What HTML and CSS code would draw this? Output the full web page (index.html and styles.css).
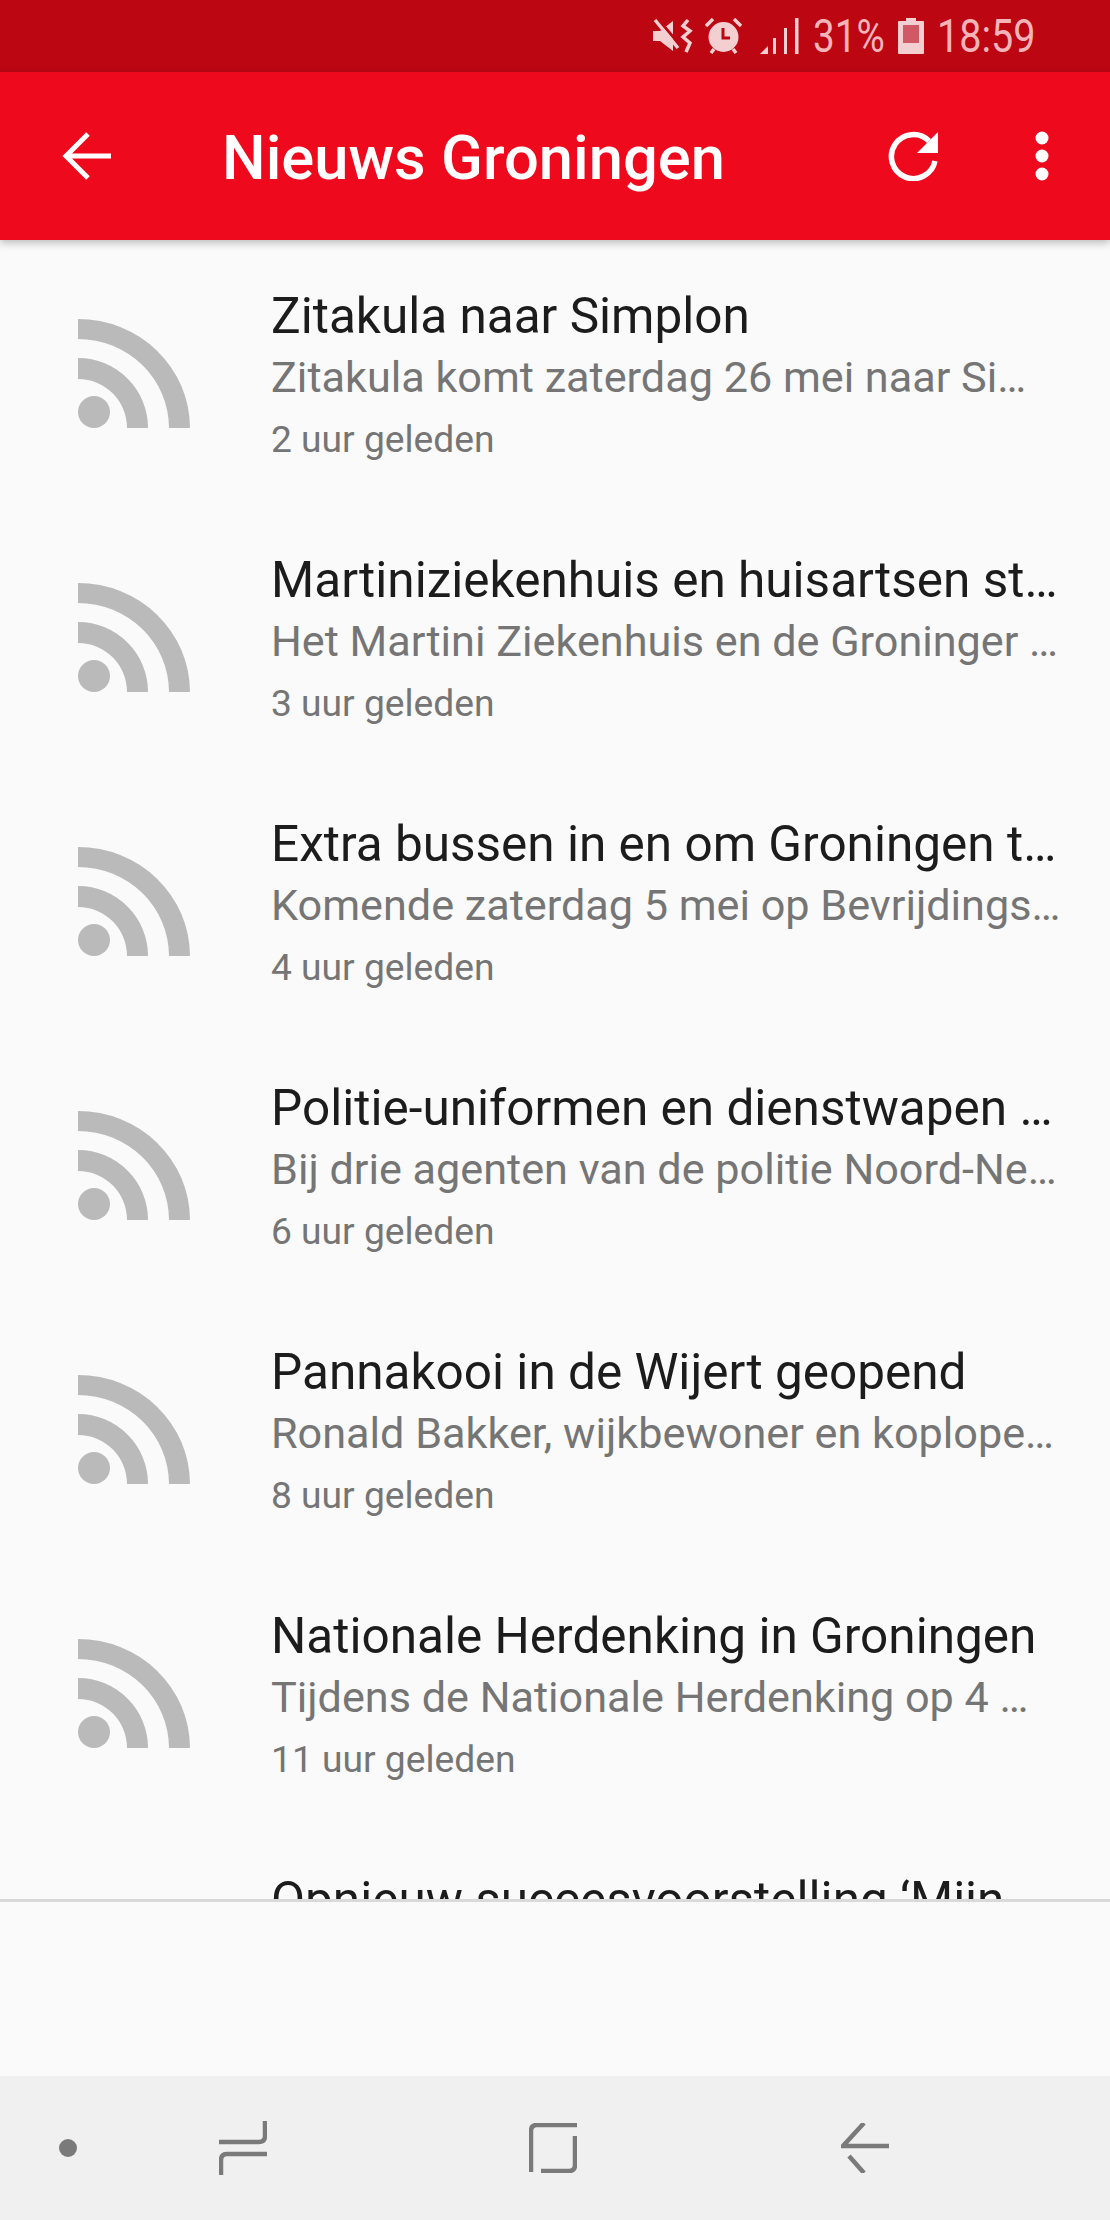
FILE: index.html
```html
<!DOCTYPE html>
<html lang="nl">
<head>
    <meta charset="UTF-8">
    <meta name="viewport" content="width=device-width, initial-scale=1.0">
    <title>Nieuws Groningen</title>
    <link rel="stylesheet" href="styles.css">
</head>
<body>
    <svg class="icon-defs" width="0" height="0">
        <symbol id="rss" viewBox="0 0 112 109">
            <circle cx="16" cy="93" r="16"/>
            <path d="M0 39 A70 70 0 0 1 70 109 H49 A49 49 0 0 0 0 60 Z"/>
            <path d="M0 0 A112 109 0 0 1 112 109 H91 A91 89 0 0 0 0 20 Z"/>
        </symbol>
    </svg>

    <div class="status-bar">
        <svg class="st-mute" width="40" height="36" viewBox="0 0 40 36">
            <path d="M0 13 H7 L20 3 V33 L7 23 H0 Z"/>
            <path d="M4 0 L27 27" stroke="#bc0612" stroke-width="3" fill="none"/>
            <path d="M2 2 L25 30" stroke="#f3cfd2" stroke-width="3.500" fill="none"/>
            <path d="M35 2 L30 8 L37 13 L30 19 L37 25 L33 34" stroke="#f3cfd2" stroke-width="3.500" fill="none"/>
        </svg>
        <svg class="st-alarm" width="37" height="36" viewBox="0 0 37 36">
            <circle cx="18.500" cy="19" r="15" fill="#f3cfd2"/>
            <path d="M1 8 L8 1 M36 8 L29 1 M6 35 L9 31 M31 35 L28 31" stroke="#f3cfd2" stroke-width="3.500" fill="none"/>
            <path d="M18 10 V20 H25" stroke="#bc0612" stroke-width="3" fill="none"/>
        </svg>
        <svg class="st-signal" width="39" height="36" viewBox="0 0 39 36">
            <path d="M0 36 L8 28 V36 Z"/>
            <rect x="13" y="20" width="3" height="16"/>
            <rect x="24" y="10" width="3" height="26"/>
            <rect x="35" y="0" width="3.500" height="36"/>
        </svg>
        <span class="st-text st-battery-text">31%</span>
        <svg class="st-battery" width="26" height="36" viewBox="0 0 26 36">
            <path d="M8 0 H18 V3 H25 Q26 3 26 4 V35 Q26 36 25 36 H1 Q0 36 0 35 V4 Q0 3 1 3 H8 Z" fill="#f3cfd2"/>
            <rect x="5" y="7" width="16" height="18" fill="#cf5a66"/>
        </svg>
        <span class="st-text st-time">18:59</span>
    </div>

    <header class="toolbar">
        <svg class="tb-back" width="50" height="50" viewBox="0 0 50 50">
            <path d="M49 25 H4 M26 3 L4 25 L26 47" stroke="#fff" stroke-width="5" fill="none"/>
        </svg>
        <h1 class="tb-title">Nieuws Groningen</h1>
        <svg class="tb-refresh" width="50" height="50" viewBox="0 0 50 50">
            <path d="M41 10 A22 22 0 1 0 47 30" stroke="#fff" stroke-width="5.500" fill="none"/>
            <path d="M50 1 V22 H29 Z" fill="#fff"/>
        </svg>
        <svg class="tb-more" width="14" height="50" viewBox="0 0 14 50">
            <circle cx="7" cy="7" r="6.500" fill="#fff"/>
            <circle cx="7" cy="25" r="6.500" fill="#fff"/>
            <circle cx="7" cy="43" r="6.500" fill="#fff"/>
        </svg>
    </header>

    <main class="feed">
        <div class="feed-row">
            <svg class="feed-icon"><use href="#rss"/></svg>
            <div class="feed-text">
                <div class="feed-title">Zitakula naar Simplon</div>
                <div class="feed-sub">Zitakula komt zaterdag 26 mei naar Si…</div>
                <div class="feed-time">2 uur geleden</div>
            </div>
        </div>
        <div class="feed-row">
            <svg class="feed-icon"><use href="#rss"/></svg>
            <div class="feed-text">
                <div class="feed-title">Martiniziekenhuis en huisartsen st…</div>
                <div class="feed-sub">Het Martini Ziekenhuis en de Groninger …</div>
                <div class="feed-time">3 uur geleden</div>
            </div>
        </div>
        <div class="feed-row">
            <svg class="feed-icon"><use href="#rss"/></svg>
            <div class="feed-text">
                <div class="feed-title">Extra bussen in en om Groningen t…</div>
                <div class="feed-sub">Komende zaterdag 5 mei op Bevrijdings…</div>
                <div class="feed-time">4 uur geleden</div>
            </div>
        </div>
        <div class="feed-row">
            <svg class="feed-icon"><use href="#rss"/></svg>
            <div class="feed-text">
                <div class="feed-title">Politie-uniformen en dienstwapen …</div>
                <div class="feed-sub">Bij drie agenten van de politie Noord-Ne…</div>
                <div class="feed-time">6 uur geleden</div>
            </div>
        </div>
        <div class="feed-row">
            <svg class="feed-icon"><use href="#rss"/></svg>
            <div class="feed-text">
                <div class="feed-title">Pannakooi in de Wijert geopend</div>
                <div class="feed-sub">Ronald Bakker, wijkbewoner en koplope…</div>
                <div class="feed-time">8 uur geleden</div>
            </div>
        </div>
        <div class="feed-row">
            <svg class="feed-icon"><use href="#rss"/></svg>
            <div class="feed-text">
                <div class="feed-title">Nationale Herdenking in Groningen</div>
                <div class="feed-sub">Tijdens de Nationale Herdenking op 4 …</div>
                <div class="feed-time">11 uur geleden</div>
            </div>
        </div>
        <div class="feed-row">
            <svg class="feed-icon"><use href="#rss"/></svg>
            <div class="feed-text">
                <div class="feed-title">Opnieuw succesvoorstelling ‘Mijn</div>
            </div>
        </div>
    </main>

    <div class="footer-space"></div>

    <nav class="nav-bar">
        <svg class="nav-dot" width="18" height="18" viewBox="0 0 18 18">
            <circle cx="9" cy="9" r="9"/>
        </svg>
        <svg class="nav-recent" width="48" height="54" viewBox="0 0 48 54">
            <path d="M46 0 V15 Q46 21 40 21 H0" />
            <path d="M2 54 V39 Q2 33 8 33 H48" />
        </svg>
        <svg class="nav-home" width="48" height="50" viewBox="0 0 48 50">
            <path d="M48 2 H8 Q2 2 2 8 V49" />
            <path d="M46 13 V42 Q46 48 40 48 H12" />
        </svg>
        <svg class="nav-back" width="48" height="50" viewBox="0 0 48 50">
            <path d="M23 0 L2 23 H48" />
            <path d="M8 33 L23 50" />
        </svg>
    </nav>
</body>
</html>
```

FILE: styles.css
```css
* {
    box-sizing: border-box;
}

html, body {
    margin: 0;
    padding: 0;
}

body {
    width: 1110px;
    height: 2220px;
    overflow: hidden;
    background-color: #fafafa;
    font-family: Roboto, "Noto Sans", sans-serif;
    display: flex;
    flex-direction: column;
}

.icon-defs {
    position: absolute;
}

/* status bar */
.status-bar {
    height: 72px;
    background-color: #bc0612;
    display: flex;
    align-items: center;
    padding-left: 653px;
    fill: #f3cfd2;
    color: #f5b4ba;
    flex-shrink: 0;
}

.st-alarm {
    margin-left: 12px;
}

.st-signal {
    margin-left: 18px;
}

.st-text {
    font-size: 46px;
    line-height: 72px;
    display: inline-block;
    transform-origin: left center;
    white-space: nowrap;
}

.st-battery-text {
    width: 72px;
    margin-left: 14px;
    transform: scaleX(0.84);
}

.st-battery {
    margin-left: 13px;
}

.st-time {
    width: 98px;
    margin-left: 13px;
    transform: scaleX(0.86);
}

/* toolbar */
.toolbar {
    height: 168px;
    background-color: #ee0a1c;
    display: flex;
    align-items: center;
    box-shadow: 0 3px 8px rgba(0, 0, 0, 0.25);
    position: relative;
    z-index: 2;
    flex-shrink: 0;
}

.tb-back {
    margin-left: 62px;
}

.tb-title {
    margin: 0 0 0 110px;
    color: #fff;
    font-size: 61.500px;
    font-weight: 500;
    line-height: 70px;
    white-space: nowrap;
    position: relative;
    top: 2px;
}

.tb-refresh {
    margin-left: auto;
}

.tb-more {
    margin-left: 97px;
    margin-right: 61px;
}

/* list */
.feed {
    height: 1662px;
    overflow: hidden;
    border-bottom: 3px solid #d9d9d9;
    flex-shrink: 0;
}

.feed-row {
    height: 264px;
    padding-left: 78px;
    display: flex;
    align-items: flex-start;
}

.feed-icon {
    width: 112px;
    height: 109px;
    margin-top: 79px;
    fill: #bababa;
    flex-shrink: 0;
}

.feed-text {
    margin-left: 81px;
    padding-top: 45px;
    width: 800px;
}

.feed-title {
    color: #1c1c1c;
    font-size: 49.500px;
    line-height: 62px;
    white-space: nowrap;
}

.feed-sub {
    color: #757575;
    font-size: 43.200px;
    line-height: 61px;
    white-space: nowrap;
}

.feed-time {
    color: #757575;
    font-size: 37.200px;
    line-height: 62px;
    white-space: nowrap;
}

.footer-space {
    height: 174px;
    flex-shrink: 0;
}

/* nav bar */
.nav-bar {
    height: 144px;
    background-color: #f0f0f0;
    display: flex;
    align-items: center;
    padding-left: 59px;
    flex-shrink: 0;
}

.nav-bar svg {
    fill: none;
    stroke: #7a7a7a;
    stroke-width: 4.500;
}

.nav-bar .nav-dot {
    fill: #7a7a7a;
    stroke: none;
}

.nav-recent {
    margin-left: 142px;
}

.nav-home {
    margin-left: 262px;
}

.nav-back {
    margin-left: 264px;
}
```
